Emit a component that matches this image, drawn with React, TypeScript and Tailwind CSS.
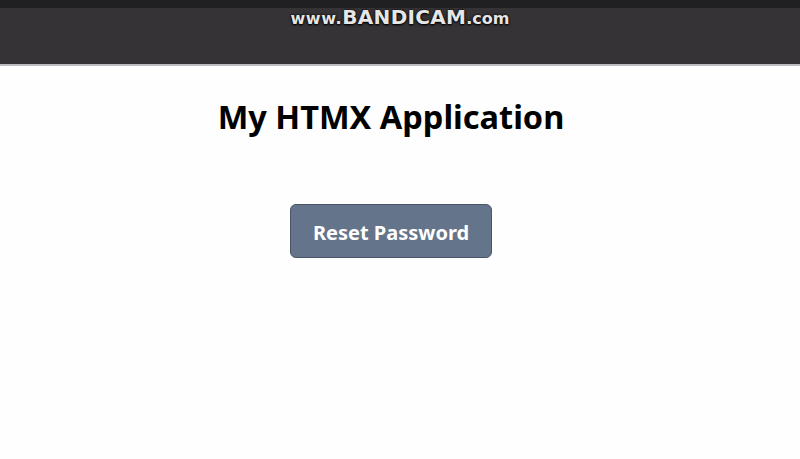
export default function App() {
  return (
    <div className="flex h-[459px] w-[800px] flex-col bg-[#fefefe] font-['Noto_Sans',sans-serif] text-black">
      <div className="h-[8px] bg-[#202023]" />
      <div className="relative h-[56px] bg-[#353336]">
        <div className="absolute left-0 right-0 top-[-1px] flex items-baseline justify-center font-['DejaVu_Sans',sans-serif] font-bold leading-none text-[#e6e6e6] [text-shadow:0_0_3px_#000,0_1px_2px_#000]">
          <span className="text-[16px] tracking-[0.6px]">www.</span>
          <span className="text-[20px] tracking-[0.3px]">BANDICAM</span>
          <span className="text-[16px]">.com</span>
        </div>
      </div>
      <div className="h-[2px] bg-[#bdbbbf]" />
      <main className="flex flex-col items-center pr-[18px]">
        <h1 className="mt-[29px] text-[32.5px] font-bold leading-[44px]">My HTMX Application</h1>
        <button className="mt-[65px] h-[54px] w-[202px] rounded-md border border-[#4b5567] bg-[#64748b] pt-[4px] text-[20px] font-bold text-white">
          Reset Password
        </button>
      </main>
    </div>
  );
}
